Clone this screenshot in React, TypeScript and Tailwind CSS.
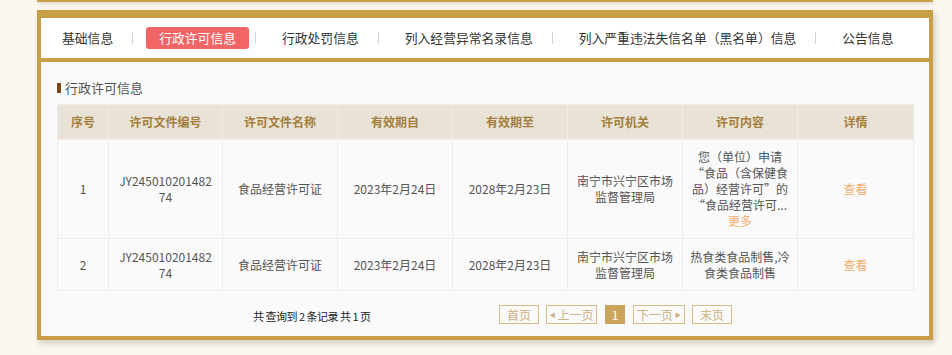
import React from "react";

const tabs = [
  "基础信息",
  "行政许可信息",
  "行政处罚信息",
  "列入经营异常名录信息",
  "列入严重违法失信名单（黑名单）信息",
  "公告信息",
];

const heads = [
  { t: "序号", w: "w-[51px]" },
  { t: "许可文件编号", w: "w-[114px]" },
  { t: "许可文件名称", w: "w-[115px]" },
  { t: "有效期自", w: "w-[115px]" },
  { t: "有效期至", w: "w-[115px]" },
  { t: "许可机关", w: "w-[115px]" },
  { t: "许可内容", w: "w-[115px]" },
  { t: "详情", w: "w-[116px]" },
];

type Row = {
  no: string;
  code: string[];
  name: string;
  from: string;
  to: string;
  org: string[];
  content: string[];
  more?: boolean;
  h: string;
};

const rows: Row[] = [
  {
    no: "1",
    code: ["JY245010201482", "74"],
    name: "食品经营许可证",
    from: "2023年2月24日",
    to: "2028年2月23日",
    org: ["南宁市兴宁区市场", "监督管理局"],
    content: ["您（单位）申请", "“食品（含保健食", "品）经营许可”的", "“食品经营许可..."],
    more: true,
    h: "h-[99px]",
  },
  {
    no: "2",
    code: ["JY245010201482", "74"],
    name: "食品经营许可证",
    from: "2023年2月24日",
    to: "2028年2月23日",
    org: ["南宁市兴宁区市场", "监督管理局"],
    content: ["热食类食品制售,冷", "食类食品制售"],
    h: "h-[52px]",
  },
];

function Lines({ items }: { items: string[] }) {
  return (
    <>
      {items.map((l, i) => (
        <div key={i} className="whitespace-nowrap">
          {l}
        </div>
      ))}
    </>
  );
}

export default function App() {
  return (
    <div className="min-h-[355px] w-full bg-[#fbf7ee] font-['Noto_Sans_CJK_SC',sans-serif]">
      {/* previous panel edge */}
      <div className="ml-[37px] h-[2px] w-[896px] bg-[#c99e47] shadow-[1px_2px_3px_rgba(0,0,0,0.15)]" />

      {/* MAIN PANEL */}
      <div className="ml-[37px] mt-[8px] w-[896px] bg-[#c99e47] px-[4px] pb-[4px] pt-[8px] shadow-[2px_3px_6px_rgba(0,0,0,0.18)]">
        {/* TABS */}
        <div className="flex h-[40px] items-center bg-white pl-[8px] text-[12.8px] text-[#333]">
          {tabs.map((t, i) => (
            <React.Fragment key={t}>
              <div
                className={
                  i === 1
                    ? "flex h-[22px] items-center rounded-[3px] bg-[#f26566] px-[13px] text-white"
                    : "flex h-[22px] items-center px-[13px]"
                }
              >
                {t}
              </div>
              {i < tabs.length - 1 && (
                <div className="ml-[6px] mr-[13px] h-[12px] w-px bg-[#d4d4d4]" />
              )}
            </React.Fragment>
          ))}
        </div>

        {/* CONTENT */}
        <div className="mt-[4px] bg-[#fafafa] px-[16px] pb-[12px] pt-[19px]">
          <div className="flex h-[14px] items-center text-[13px] text-[#555]">
            <span className="mr-[4px] h-[10px] w-[4px] bg-[#7b4a12]" />
            行政许可信息
          </div>

          <table className="mt-[9px] w-[856px] table-fixed border-collapse text-center text-[12px]">
            <thead>
              <tr className="h-[35px] bg-[#e9e3d7]">
                {heads.map((h) => (
                  <th
                    key={h.t}
                    className={`${h.w} border border-[#f0ece4] font-bold text-[#a47f3e]`}
                  >
                    {h.t}
                  </th>
                ))}
              </tr>
            </thead>
            <tbody className="text-[#555] leading-[16px]">
              {rows.map((r) => (
                <tr key={r.no} className={r.h}>
                  <td className="border border-[#ececec]">{r.no}</td>
                  <td className="border border-[#ececec]">
                    <Lines items={r.code} />
                  </td>
                  <td className="border border-[#ececec]">{r.name}</td>
                  <td className="border border-[#ececec]">{r.from}</td>
                  <td className="border border-[#ececec]">{r.to}</td>
                  <td className="border border-[#ececec]">
                    <Lines items={r.org} />
                  </td>
                  <td className="border border-[#ececec]">
                    <Lines items={r.content} />
                    {r.more && <div className="text-[#f2ad6b]">更多</div>}
                  </td>
                  <td className="border border-[#ececec] text-[#f2ad6b]">查看</td>
                </tr>
              ))}
            </tbody>
          </table>

          {/* PAGINATION */}
          <div className="mt-[14px] flex h-[19px] items-center text-[12px]">
            <div className="ml-[196px] w-[246px] pt-[3px] text-[11px] tracking-[-0.5px] text-[#222]">
              共 查询到 2 条记录 共 1 页
            </div>
            <div className="flex items-center gap-[7px] text-[#cdb083]">
              <div className="flex h-[19px] w-[40px] items-center justify-center border border-[#d6bb85]">
                首页
              </div>
              <div className="flex h-[19px] w-[51px] items-center justify-center border border-[#d6bb85]">
                <span className="mr-[2px] text-[6px]">◀</span>上一页
              </div>
              <div className="mx-px flex h-[19px] w-[20px] items-center justify-center bg-[#cba55c] text-white">
                1
              </div>
              <div className="flex h-[19px] w-[52px] items-center justify-center border border-[#d6bb85]">
                下一页<span className="ml-[2px] text-[6px]">▶</span>
              </div>
              <div className="flex h-[19px] w-[40px] items-center justify-center border border-[#d6bb85]">
                末页
              </div>
            </div>
          </div>
        </div>
      </div>
    </div>
  );
}
